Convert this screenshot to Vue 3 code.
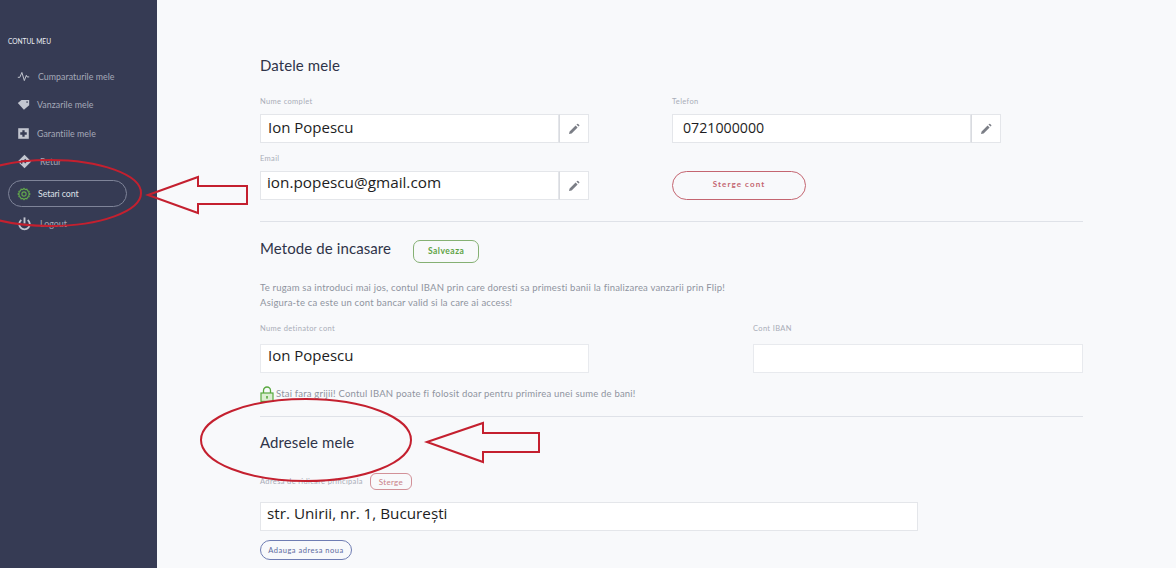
<template>
  <div class="pagina">
    <aside class="sidebar">
      <div class="sidebar-titlu">CONTUL MEU</div>
      <nav class="meniu">
        <a v-for="item in meniu" :key="item.text" class="meniu-item" :class="[item.cls, { activ: item.activ }]">
          <svg class="meniu-icon" viewBox="0 0 16 16" v-html="item.icon"></svg>
          <span>{{ item.text }}</span>
        </a>
      </nav>
    </aside>

    <main class="continut">
      <section class="sectiune datele">
        <h2>Datele mele</h2>
        <div class="grid-date">
          <div class="camp">
            <label>Nume complet</label>
            <div class="input-grup">
              <div class="input">Ion Popescu</div>
              <button class="btn-edit"><svg viewBox="0 0 12 12"><path d="M1 11l.6-2.6 6-6 2 2-6 6zM8.4 1.6l.8-.7a.7.7 0 0 1 1 0l1 1a.7.7 0 0 1 0 1l-.7.7z" /></svg></button>
            </div>
          </div>
          <div class="camp">
            <label>Telefon</label>
            <div class="input-grup">
              <div class="input telefon">0721000000</div>
              <button class="btn-edit"><svg viewBox="0 0 12 12"><path d="M1 11l.6-2.6 6-6 2 2-6 6zM8.4 1.6l.8-.7a.7.7 0 0 1 1 0l1 1a.7.7 0 0 1 0 1l-.7.7z" /></svg></button>
            </div>
          </div>
          <div class="camp">
            <label>Email</label>
            <div class="input-grup">
              <div class="input email">ion.popescu@gmail.com</div>
              <button class="btn-edit"><svg viewBox="0 0 12 12"><path d="M1 11l.6-2.6 6-6 2 2-6 6zM8.4 1.6l.8-.7a.7.7 0 0 1 1 0l1 1a.7.7 0 0 1 0 1l-.7.7z" /></svg></button>
            </div>
          </div>
          <div class="camp camp-buton">
            <button class="btn-sterge-cont">Sterge cont</button>
          </div>
        </div>
      </section>

      <section class="sectiune metode">
        <div class="titlu-rand">
          <h2>Metode de incasare</h2>
          <button class="btn-salveaza">Salveaza</button>
        </div>
        <p class="descriere">
          Te rugam sa introduci mai jos, contul IBAN prin care doresti sa primesti banii la finalizarea vanzarii prin Flip!<br />
          Asigura-te ca este un cont bancar valid si la care ai access!
        </p>
        <div class="grid-cont">
          <div class="camp">
            <label>Nume detinator cont</label>
            <div class="input simplu">Ion Popescu</div>
          </div>
          <div class="camp">
            <label>Cont IBAN</label>
            <div class="input simplu"></div>
          </div>
        </div>
        <div class="nota">
          <svg class="lacat" viewBox="0 0 14 16">
            <path d="M3.5 7V4.5a3.5 3.5 0 0 1 7 0V7" fill="none" stroke="#58a83e" stroke-width="1.3" />
            <rect x="1" y="7" width="12" height="8.4" fill="#dceed2" stroke="#58a83e" stroke-width="1.2" />
            <rect x="6.2" y="10" width="1.6" height="2.6" fill="#58a83e" />
          </svg>
          <span>Stai fara grijii! Contul IBAN poate fi folosit doar pentru primirea unei sume de bani!</span>
        </div>
      </section>

      <section class="sectiune adrese">
        <h2>Adresele mele</h2>
        <div class="adresa-rand">
          <label>Adresa de ridicare principala</label>
          <button class="btn-sterge">Sterge</button>
        </div>
        <div class="input adresa">str. Unirii, nr. 1, București</div>
        <button class="btn-adauga">Adauga adresa noua</button>
      </section>
    </main>

    <!-- Adnotarile rosii de pe captura -->
    <svg class="adnotari" viewBox="0 0 1176 568">
      <ellipse cx="50" cy="193" rx="91" ry="33" />
      <polygon points="148,195 198,177 198,186 247,186 247,204 198,204 198,213" />
      <ellipse cx="306" cy="440" rx="105" ry="41" />
      <polygon points="427,442 483,423 483,433 539,433 539,452 483,452 483,462" />
    </svg>
  </div>
</template>

<script setup>
const meniu = [
  {
    text: 'Cumparaturile mele',
    icon: '<path d="M1 9h2.5L6 3l3 10 2.5-6.5.8 2H15" fill="none" stroke="currentColor" stroke-width="1.2"/>'
  },
  {
    text: 'Vanzarile mele',
    cls: 'strans',
    icon: '<path d="M1 6l4.5-3.5H15v6.5L8.5 14.5z" fill="currentColor"/><circle cx="12.4" cy="5" r="1" fill="#363b54"/>'
  },
  {
    text: 'Garantiile mele',
    cls: 'strans',
    icon: '<rect x="1.5" y="1.5" width="13" height="13" fill="currentColor"/><path d="M6.6 4h2.8v2.6H12v2.8H9.4V12H6.6V9.4H4V6.6h2.6z" fill="#363b54"/>'
  },
  {
    text: 'Retur',
    cls: 'lat',
    icon: '<path d="M8 .8L15.2 8 8 15.2.8 8z" fill="currentColor"/><path d="M5 10.5V7.5h5M8.2 5.5l2 2-2 2" fill="none" stroke="#363b54" stroke-width="1.5"/>'
  },
  {
    text: 'Setari cont',
    activ: true,
    icon: '<path d="M8 1.5l1.4 1.4 1.9-.4.7 1.8 1.8.7-.4 1.9L14.8 8l-1.4 1.1.4 1.9-1.8.7-.7 1.8-1.9-.4L8 14.5l-1.4-1.4-1.9.4-.7-1.8-1.8-.7.4-1.9L1.2 8l1.4-1.1-.4-1.9 1.8-.7.7-1.8 1.9.4z" fill="none" stroke="#62a84c" stroke-width="1.3"/><circle cx="8" cy="8" r="2.4" fill="none" stroke="#62a84c" stroke-width="1.3"/>'
  },
  {
    text: 'Logout',
    cls: 'lat',
    icon: '<path d="M4.6 4.2a5.6 5.6 0 1 0 6.8 0" fill="none" stroke="currentColor" stroke-width="2"/><path d="M8 1.5v6.5" stroke="currentColor" stroke-width="2"/>'
  }
]
</script>

<style>
html, body {
  margin: 0;
  background: #f8f9fb;
}
</style>

<style scoped>
.pagina {
  position: relative;
  display: flex;
  height: 568px;
  overflow: hidden;
  font-family: Lato, "Liberation Sans", sans-serif;
  background: #f8f9fb;
}

.sidebar {
  width: 157px;
  flex-shrink: 0;
  box-sizing: border-box;
  padding: 37px 0 0 8px;
  background: #363b54;
}

.sidebar-titlu {
  font-size: 6.6px;
  line-height: 9px;
  color: #eef0f5;
}

.meniu {
  display: flex;
  flex-direction: column;
  width: 119px;
  margin-top: 16px;
}

.meniu-item {
  display: flex;
  align-items: center;
  gap: 8px;
  height: 28.5px;
  padding-left: 9px;
  font-size: 8.8px;
  letter-spacing: 0.05px;
  color: #a5a9b8;
  box-sizing: border-box;
}

.meniu-item.strans {
  gap: 7px;
}

.meniu-icon {
  width: 13px;
  height: 13px;
  flex-shrink: 0;
  color: #c3c6d0;
}

.meniu-item.lat .meniu-icon {
  width: 15px;
  height: 15px;
}

.meniu-item.activ {
  height: 27px;
  margin: 4px 0 2px;
  gap: 7px;
  color: #dfe1e8;
  border: 1px solid #7f8499;
  border-radius: 14px;
  padding-left: 8px;
  letter-spacing: -0.1px;
}

.meniu-item.activ .meniu-icon {
  width: 14px;
  height: 14px;
}

.continut {
  flex: 1;
  min-width: 0;
  padding: 0 93px 0 103px;
}

.sectiune h2 {
  margin: 0;
  font-size: 15px;
  line-height: 18px;
  font-weight: 400;
  letter-spacing: 0.1px;
  color: #2f3449;
}

.sectiune + .sectiune {
  border-top: 1px solid #dfe2e8;
}

.datele {
  padding: 56px 0 21px;
}

.grid-date {
  display: grid;
  grid-template-columns: 329px 329px;
  column-gap: 83px;
  row-gap: 11px;
  margin-top: 23px;
}

.camp label,
.adresa-rand label {
  display: block;
  font-size: 7.5px;
  line-height: 9px;
  letter-spacing: 0.35px;
  color: #a9adb8;
}

.camp label {
  margin-bottom: 8px;
}

.input-grup {
  display: flex;
  height: 29px;
}

.input {
  flex: 1;
  box-sizing: border-box;
  height: 29px;
  padding-left: 7px;
  font-family: "Open Sans", "Liberation Sans", sans-serif;
  font-size: 15px;
  line-height: 24px;
  color: #1d1d22;
  background: #fff;
  border: 1px solid #e4e6ea;
}

.input.email {
  padding-left: 6px;
  font-size: 15.3px;
  line-height: 20px;
}

.input.telefon {
  padding-left: 10px;
  font-size: 14.2px;
  line-height: 25px;
}

.btn-edit {
  width: 30px;
  height: 29px;
  padding: 0;
  display: flex;
  align-items: center;
  justify-content: center;
  background: #fff;
  border: 1px solid #e4e6ea;
  border-left: 1px solid #d9dbe0;
}

.btn-edit svg {
  width: 12px;
  height: 12px;
  fill: #7b7e86;
}

.camp-buton {
  padding-top: 17px;
}

.btn-sterge-cont {
  display: block;
  width: 134px;
  height: 29px;
  padding: 0 0 3px;
  font-family: Lato, "Liberation Sans", sans-serif;
  font-size: 8px;
  font-weight: 700;
  letter-spacing: 1.1px;
  color: #c46570;
  background: transparent;
  border: 1px solid #c46570;
  border-radius: 15px;
}

.metode {
  padding: 18px 0 14px;
}

.titlu-rand {
  display: flex;
  align-items: flex-start;
  gap: 22px;
}

.titlu-rand h2 {
  margin-top: -1px;
}

.btn-salveaza {
  width: 66px;
  height: 23px;
  padding: 0 0 2px;
  font-family: Lato, "Liberation Sans", sans-serif;
  font-size: 8.5px;
  font-weight: 700;
  letter-spacing: 0.5px;
  color: #5da344;
  background: transparent;
  border: 1px solid #85b073;
  border-radius: 7px;
}

.descriere {
  margin: 17px 0 0;
  font-size: 9.5px;
  line-height: 15px;
  letter-spacing: 0.2px;
  color: #8f94a0;
}

.grid-cont {
  display: grid;
  grid-template-columns: 329px 330px;
  justify-content: space-between;
  margin-top: 14px;
}

.grid-cont .camp label {
  margin-bottom: 11px;
}

.input.simplu {
  line-height: 21px;
  border-color: #e8eaee;
}

.nota {
  display: flex;
  align-items: center;
  gap: 2px;
  margin-top: 13px;
  font-size: 9.5px;
  line-height: 16px;
  letter-spacing: 0.2px;
  color: #8f94a0;
}

.lacat {
  width: 14px;
  height: 16px;
}

.adrese {
  padding-top: 16px;
}

.adresa-rand {
  display: flex;
  align-items: center;
  gap: 7px;
  margin-top: 22px;
}

.btn-sterge {
  width: 42px;
  height: 17px;
  padding: 0;
  font-family: Lato, "Liberation Sans", sans-serif;
  font-size: 8px;
  letter-spacing: 0.3px;
  color: #c98088;
  background: transparent;
  border: 1px solid #d29198;
  border-radius: 6px;
}

.input.adresa {
  width: 658px;
  margin-top: 12px;
  padding-left: 6px;
  font-size: 15.25px;
  line-height: 21px;
}

.btn-adauga {
  display: block;
  width: 92px;
  height: 20px;
  margin-top: 9px;
  padding: 0;
  font-family: Lato, "Liberation Sans", sans-serif;
  font-size: 7.5px;
  letter-spacing: 0.5px;
  color: #5c6aa0;
  background: transparent;
  border: 1px solid #6f7db3;
  border-radius: 10px;
}

.adnotari {
  position: absolute;
  inset: 0;
  width: 1176px;
  height: 568px;
  pointer-events: none;
}

.adnotari ellipse,
.adnotari polygon {
  fill: none;
  stroke: #c4202f;
  stroke-width: 2;
}
</style>
